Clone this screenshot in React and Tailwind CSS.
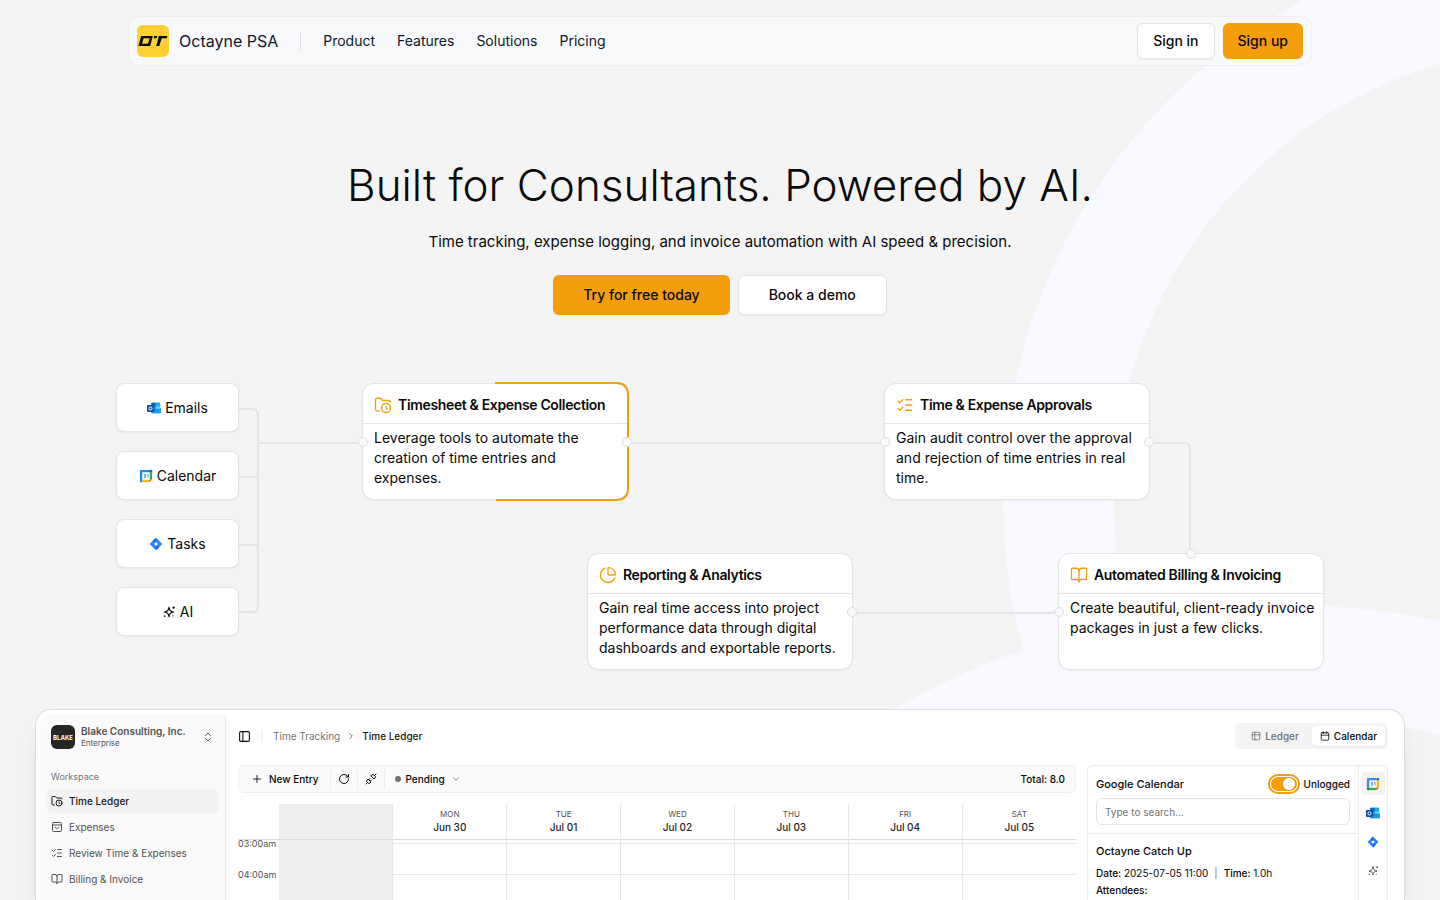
import {
  BookOpen,
  Calendar,
  ChartPie,
  ChevronDown,
  ChevronRight,
  ChevronsUpDown,
  FolderClock,
  ListChecks,
  PanelLeft,
  Plus,
  RotateCw,
  Table2,
  Unplug
} from 'lucide-react';

const navLinks = ['Product', 'Features', 'Solutions', 'Pricing'];

const days = [
  ['MON', 'Jun 30'],
  ['TUE', 'Jul 01'],
  ['WED', 'Jul 02'],
  ['THU', 'Jul 03'],
  ['FRI', 'Jul 04'],
  ['SAT', 'Jul 05']
];

const hours = ['03:00am', '04:00am'];

function LogoMark() {
  return (
    <svg viewBox="0 0 32 32" className="size-8" aria-hidden="true">
      <rect width="32" height="32" rx="6" fill="#ffcf33" />
      <path
        d="M4.2 11H15.8L13.2 21H1.4Z M6.6 13.2L5 18.8H11L12.6 13.2Z"
        fill="#0a0a0a"
        fillRule="evenodd"
      />
      <path d="M17.2 11H20.2L19.6 13.2H16.6Z" fill="#0a0a0a" />
      <path d="M21.4 11H30.4L29.8 13.2H24.8L22.2 21H19.2L21.4 13.2Z" fill="#0a0a0a" />
    </svg>
  );
}

function OutlookIcon({ className }) {
  return (
    <svg viewBox="0 0 16 16" className={className} aria-hidden="true">
      <rect x="5" y="2" width="10" height="12" rx="1" fill="#1490df" />
      <path d="M5 2h5v4H5z" fill="#0364b8" />
      <path d="M10 2h5v4h-5z" fill="#28a8ea" />
      <path d="M10 6h5v3h-5z" fill="#50d9ff" />
      <path d="M5 9.5l5 2.5 6-4v5.2a.8.8 0 0 1-.8.8H5z" fill="#1f9ce8" />
      <rect x="0" y="4.5" width="8" height="8" rx=".8" fill="#0f4fa8" />
      <circle cx="4" cy="8.5" r="1.8" fill="none" stroke="#fff" strokeWidth="1.1" />
    </svg>
  );
}

function GoogleCalendarIcon({ className }) {
  return (
    <svg viewBox="0 0 16 16" className={className} aria-hidden="true">
      <path d="M1 2.5A1.5 1.5 0 0 1 2.5 1H12v3H4v8H1z" fill="#4285f4" />
      <path d="M12 1h1.5A1.5 1.5 0 0 1 15 2.5V4h-3z" fill="#1967d2" />
      <path d="M12 4h3v8h-3z" fill="#fbbc04" />
      <path d="M1 12h3v3H2.5A1.5 1.5 0 0 1 1 13.5z" fill="#188038" />
      <path d="M4 12h8v3H4z" fill="#34a853" />
      <path d="M12 12h3l-3 3z" fill="#ea4335" />
      <path d="M4 4h8v8H4z" fill="#fff" />
      <path
        d="M5.4 6.2h2v1.7H6.2h1.200v2H5.4M9.2 6.7l1.2-.6V10"
        fill="none"
        stroke="#4285f4"
        strokeWidth=".9"
      />
    </svg>
  );
}

// calendar tile in the source list, framed blue / green / yellow
function CalendarTileIcon({ className }) {
  return (
    <svg viewBox="0 0 16 16" className={className} aria-hidden="true">
      <path d="M1 1h14v3H4v11H1z" fill="#1a8fe3" />
      <path d="M12 1h3v3h-3z" fill="#1967d2" />
      <path d="M12 4h3v8h-3z" fill="#34a853" />
      <path d="M4 12h8v3H4z" fill="#fbbc04" />
      <path d="M12 12h3l-3 3z" fill="#ea4335" />
      <path d="M4 4h8v8H4z" fill="#fff" />
      <path
        d="M5.4 6.2h2v1.7H6.2h1.200v2H5.4M9.2 6.7l1.2-.6V10"
        fill="none"
        stroke="#1a8fe3"
        strokeWidth=".9"
      />
    </svg>
  );
}

function JiraIcon({ className }) {
  return (
    <svg viewBox="0 0 16 16" className={className} aria-hidden="true">
      <path d="M8 .8L15.2 8 8 15.2.8 8z" fill="#2684ff" />
      <path d="M8 .8L4.400 4.400 8 8z" fill="#1668e0" />
      <path d="M8 15.2l3.600-3.600L8 8z" fill="#1668e0" />
      <path d="M8 5.700L10.300 8 8 10.300 5.700 8z" fill="#fff" />
    </svg>
  );
}

function SparkIcon({ className }) {
  return (
    <svg
      viewBox="0 0 24 24"
      className={className}
      fill="none"
      stroke="currentColor"
      strokeWidth="2"
      strokeLinecap="round"
      strokeLinejoin="round"
      aria-hidden="true"
    >
      <path d="M12 4c.6 5 3 7.400 8 8-5 .6-7.400 3-8 8-.6-5-3-7.400-8-8 5-.6 7.400-3 8-8z" />
      <circle cx="20" cy="4.500" r="1" />
      <circle cx="4.500" cy="19" r=".6" />
      <path d="M18.500 18.500v.1" />
    </svg>
  );
}

function ReceiptBoxIcon({ className }) {
  return (
    <svg
      viewBox="0 0 24 24"
      className={className}
      fill="none"
      stroke="currentColor"
      strokeWidth="2"
      strokeLinecap="round"
      strokeLinejoin="round"
      aria-hidden="true"
    >
      <rect x="3" y="3" width="18" height="18" rx="2" />
      <path d="M3 8h18M8 12c1 4 7 4 8 0" />
    </svg>
  );
}

function SourceNode({ icon: Icon, label, className, iconClass }) {
  return (
    <div
      className={`absolute left-0 flex h-[49px] w-[123px] items-center justify-center gap-1 rounded-lg border border-[#e4e4e4] bg-white text-sm text-neutral-950 shadow-xs ${className}`}
    >
      <Icon className={iconClass} />
      {label}
    </div>
  );
}

function FlowCard({ icon: Icon, title, text, className }) {
  return (
    <article
      className={`absolute h-[117px] w-[266px] rounded-xl border border-[#e4e4e4] bg-white text-sm text-neutral-950 shadow-xs ${className}`}
    >
      <h2 className="flex h-10 items-center gap-1.5 border-b border-[#e4e4e4] px-[11px] pt-0.5 font-semibold tracking-tight">
        <Icon size={18} strokeWidth={1.75} className="shrink-0 text-[#f59e0b]" />
        {title}
      </h2>
      <p className="py-1 pr-2 pl-[11px] leading-5">{text}</p>
    </article>
  );
}

function Handle({ className }) {
  return (
    <span className={`absolute size-[10px] rounded-full border border-[#e0e0e0] bg-[#fafafa] ${className}`} />
  );
}

function SideItem({ icon: Icon, label, active }) {
  return (
    <li>
      <a
        href="#"
        className={`flex h-6 items-center gap-1.5 rounded-md px-[5px] text-[10px] ${
          active ? 'bg-[#f3f3f3] font-medium text-neutral-900' : 'text-neutral-600'
        }`}
      >
        <Icon className="size-3" />
        {label}
      </a>
    </li>
  );
}

function FlowDiagram() {
  return (
    <section className="relative mx-auto mt-[68px] h-[287px] w-[1208px] shrink-0">
      <svg
        viewBox="0 0 1208 287"
        className="absolute inset-0 size-full"
        fill="none"
        stroke="#e4e4e4"
        strokeWidth="2"
        aria-hidden="true"
      >
        <path d="M123 26H136Q142 26 142 32V223Q142 229 136 229H123M123 94H142M123 162H142" />
        <path d="M142 60H247M511 60H769M1033 60H1068Q1074 60 1074 66V171M736 230H943" />
      </svg>

      <SourceNode icon={OutlookIcon} label="Emails" className="top-0" iconClass="size-[14px]" />
      <SourceNode icon={CalendarTileIcon} label="Calendar" className="top-[68px]" iconClass="size-[14px]" />
      <SourceNode icon={JiraIcon} label="Tasks" className="top-[136px]" iconClass="size-[14px]" />
      <SourceNode icon={SparkIcon} label="AI" className="top-[204px]" iconClass="size-[14px]" />

      <FlowCard
        icon={FolderClock}
        title="Timesheet & Expense Collection"
        text="Leverage tools to automate the creation of time entries and expenses."
        className="top-0 left-[246px]"
      />
      <FlowCard
        icon={ListChecks}
        title="Time & Expense Approvals"
        text="Gain audit control over the approval and rejection of time entries in real time."
        className="top-0 left-[768px]"
      />
      <FlowCard
        icon={ChartPie}
        title="Reporting & Analytics"
        text="Gain real time access into project performance data through digital dashboards and exportable reports."
        className="top-[170px] left-[471px]"
      />
      <FlowCard
        icon={BookOpen}
        title="Automated Billing & Invoicing"
        text="Create beautiful, client-ready invoice packages in just a few clicks."
        className="top-[170px] left-[942px]"
      />

      {/* progress trace running round the active card */}
      <svg
        viewBox="0 0 1208 287"
        className="absolute inset-0 size-full overflow-visible"
        fill="none"
        stroke="#f59e0b"
        strokeWidth="2"
        aria-hidden="true"
      >
        <path d="M379 0H500Q512 0 512 12V105Q512 117 500 117H380" />
      </svg>

      <Handle className="top-[54px] left-[242px]" />
      <Handle className="top-[54px] left-[506px]" />
      <Handle className="top-[54px] left-[764px]" />
      <Handle className="top-[54px] left-[1028px]" />
      <Handle className="top-[166px] left-[1070px]" />
      <Handle className="top-[224px] left-[731px]" />
      <Handle className="top-[224px] left-[938px]" />
    </section>
  );
}

function Sidebar() {
  return (
    <aside className="w-[186px] shrink-0 rounded-tl-xl border-r border-[#ececec] bg-[#fafafa] px-1.5 pt-[11px]">
      <button className="flex w-full items-center gap-1.5 px-[5px] text-left">
        <span className="flex size-6 items-center justify-center overflow-hidden rounded-md bg-[#262626] text-[6px] font-bold text-white">
          BLAKE
        </span>
        <span className="flex-1">
          <span className="block text-[10px] leading-[13px] font-semibold text-neutral-600">
            Blake Consulting, Inc.
          </span>
          <span className="block text-[8px] leading-[11px] text-neutral-600">Enterprise</span>
        </span>
        <ChevronsUpDown size={12} className="text-neutral-600" />
      </button>
      <p className="mt-5 mb-1 px-[5px] text-[9px] leading-4 text-neutral-500">Workspace</p>
      <ul className="grid gap-0.5">
        <SideItem icon={FolderClock} label="Time Ledger" active />
        <SideItem icon={ReceiptBoxIcon} label="Expenses" />
        <SideItem icon={ListChecks} label="Review Time & Expenses" />
        <SideItem icon={BookOpen} label="Billing & Invoice" />
      </ul>
    </aside>
  );
}

function WeekTable() {
  return (
    <table className="mt-[11px] w-full table-fixed border-collapse">
      <thead>
        <tr className="h-[35px] border-b border-[#dcdcdc]">
          <td className="w-[41px]" />
          <td className="bg-[#efefef]" />
          {days.map(([day, date]) => (
            <th key={day} scope="col" className="border-l border-[#e8e8e8] p-0 text-center font-normal">
              <span className="block text-[8px] leading-[13px] text-neutral-600">{day}</span>
              <span className="block text-[10px] leading-[13px] font-medium text-neutral-800">{date}</span>
            </th>
          ))}
        </tr>
      </thead>
      <tbody>
        <tr className="h-1">
          <td />
          <td className="bg-[#efefef]" />
          {days.map(([day]) => (
            <td key={day} className="border-b border-l border-[#e8e8e8]" />
          ))}
        </tr>
        {hours.map((hour) => (
          <tr key={hour} className="h-[31px]">
            <th scope="row" className="p-0 text-left align-top font-normal">
              <span className="-mt-1 block text-[9px] leading-[10px] text-neutral-600">{hour}</span>
            </th>
            <td className="bg-[#efefef]" />
            {days.map(([day]) => (
              <td key={day} className="border-b border-l border-[#e8e8e8]" />
            ))}
          </tr>
        ))}
      </tbody>
    </table>
  );
}

function CalendarPanel() {
  return (
    <div className="flex w-[301px] shrink-0 rounded-t-md border border-b-0 border-[#ececec] text-neutral-950">
      <div className="min-w-0 flex-1 border-r border-[#ececec]">
        <div className="border-b border-[#ececec] px-2 pt-2 pb-2">
          <div className="flex h-5 items-center justify-between">
            <h3 className="text-[11px] font-medium">Google Calendar</h3>
            <label className="flex items-center gap-1 text-[10px] font-medium">
              <input type="checkbox" role="switch" defaultChecked className="peer sr-only" />
              <span className="flex h-5 w-8 items-center justify-end rounded-full border-2 border-[#f59e0b] bg-[#f59e0b] bg-clip-content p-px">
                <span className="mr-0.5 size-3 rounded-full bg-white" />
              </span>
              Unlogged
            </label>
          </div>
          <input
            type="text"
            aria-label="Search events"
            placeholder="Type to search..."
            className="mt-1 block h-[27px] w-full rounded-md border border-[#e4e4e4] px-2 text-[10px] placeholder:text-neutral-500"
          />
        </div>
        <div className="px-2 pt-[9px]">
          <h4 className="text-[11px] leading-4 font-medium">Octayne Catch Up</h4>
          <p className="mt-1.5 text-[10px] leading-[17px]">
            <span className="font-medium">Date:</span> 2025-07-05 11:00
            <span className="mx-1.5 text-neutral-500">|</span>
            <span className="font-medium">Time:</span> 1.0h
          </p>
          <p className="text-[10px] leading-[17px] font-medium">Attendees:</p>
        </div>
      </div>
      <div className="flex w-7 flex-col items-center gap-1.5 pt-1.5">
        <button aria-label="Google Calendar" className="flex size-[23px] items-center justify-center rounded bg-[#f3f3f3]">
          <GoogleCalendarIcon className="size-[14px]" />
        </button>
        <button aria-label="Outlook" className="flex size-[23px] items-center justify-center">
          <OutlookIcon className="size-[14px]" />
        </button>
        <button aria-label="Jira" className="flex size-[23px] items-center justify-center">
          <JiraIcon className="size-3" />
        </button>
        <button aria-label="Assistant" className="flex size-[23px] items-center justify-center text-neutral-600">
          <SparkIcon className="size-3" />
        </button>
      </div>
    </div>
  );
}

function ProductPreview() {
  return (
    <section className="mx-[35px] mt-[39px] flex min-h-0 flex-1 overflow-hidden rounded-t-2xl border border-b-0 border-[#dedede] bg-white pt-1 pr-4 pl-1 shadow-xl">
      <Sidebar />
      <div className="min-w-0 flex-1 pt-[9px] pl-3">
        <div className="flex h-[26px] items-center text-[10px]">
          <button aria-label="Toggle sidebar">
            <PanelLeft size={13} />
          </button>
          <span className="mr-[11px] ml-2.5 h-3 w-px bg-[#ececec]" />
          <nav aria-label="Breadcrumb" className="flex items-center gap-1.5">
            <a href="#" className="text-neutral-500">
              Time Tracking
            </a>
            <ChevronRight size={10} className="text-neutral-600" />
            <span className="font-medium text-neutral-900">Time Ledger</span>
          </nav>
          <div className="ml-auto flex h-[26px] items-center rounded-md bg-[#f4f4f4] p-[3px] font-medium">
            <button className="flex h-5 items-center gap-1 px-[13px] text-neutral-500">
              <Table2 size={10} />
              Ledger
            </button>
            <button className="flex h-5 items-center gap-1 rounded bg-white px-2 text-neutral-950 shadow-xs">
              <Calendar size={10} />
              Calendar
            </button>
          </div>
        </div>

        <div className="mt-4 flex gap-[11px]">
          <div className="min-w-0 flex-1">
            <div className="flex h-7 items-center rounded-md border border-[#efefef] bg-[#fafafa] pr-2.5 pl-2 text-[10px] font-medium text-neutral-950">
              <button className="flex items-center gap-1.5 px-1 pr-3">
                <Plus size={12} strokeWidth={1.75} />
                New Entry
              </button>
              <button aria-label="Refresh" className="border-l border-[#ececec] px-[7px] py-1">
                <RotateCw size={12} />
              </button>
              <button aria-label="Connections" className="border-x border-[#ececec] px-[7px] py-1">
                <Unplug size={12} />
              </button>
              <button className="flex items-center gap-1 px-2.5">
                <span className="size-1.5 rounded-full bg-neutral-500" />
                Pending
                <ChevronDown size={10} className="ml-0.5 text-neutral-500" />
              </button>
              <span className="ml-auto">Total: 8.0</span>
            </div>
            <WeekTable />
          </div>
          <CalendarPanel />
        </div>
      </div>
    </section>
  );
}

export default function App() {
  return (
    <div className="relative isolate flex h-screen flex-col overflow-hidden bg-[#f4f4f4] font-['Inter','Liberation_Sans',sans-serif] text-neutral-950">
      <svg
        viewBox="0 0 1440 900"
        preserveAspectRatio="xMaxYMin slice"
        className="absolute inset-0 -z-10 size-full"
        fill="none"
        stroke="#f9faff"
        strokeWidth="111"
        aria-hidden="true"
      >
        <circle cx="1569" cy="500" r="510.5" />
        <circle cx="1283" cy="1382" r="721.5" />
      </svg>

      <header className="mx-auto mt-4 flex h-[50px] w-full max-w-[1184px] shrink-0 items-center rounded-xl border border-[#eeeff1] bg-[#f8fafc]/80 px-2">
        <a href="#" className="flex items-center gap-2.5 text-slate-900">
          <LogoMark />
          Octayne PSA
        </a>
        <span className="mx-[22px] h-5 w-px bg-[#e0e2e6]" />
        <nav className="flex gap-[22px] text-sm text-slate-900">
          {navLinks.map((link) => (
            <a key={link} href="#">
              {link}
            </a>
          ))}
        </nav>
        <div className="ml-auto flex gap-2 text-sm font-medium">
          <button className="h-9 rounded-md border border-[#e4e4e4] bg-white px-[15px] shadow-xs">Sign in</button>
          <button className="h-9 rounded-md bg-[#f59e0b] px-[15px] shadow-xs">Sign up</button>
        </div>
      </header>

      <section className="mt-24 flex flex-col items-center text-center">
        <h1 className="text-[44px] leading-[46px] font-light">Built for Consultants. Powered by AI.</h1>
        <p className="mt-[22px] text-[15px] leading-6">
          Time tracking, expense logging, and invoice automation with AI speed &amp; precision.
        </p>
        <div className="mt-[21px] flex gap-2 text-sm font-medium">
          <button className="h-10 rounded-md bg-[#f59e0b] px-[30px] shadow-xs">Try for free today</button>
          <button className="h-10 rounded-md border border-[#e4e4e4] bg-white px-[30px] shadow-xs">Book a demo</button>
        </div>
      </section>

      <FlowDiagram />
      <ProductPreview />
    </div>
  );
}
